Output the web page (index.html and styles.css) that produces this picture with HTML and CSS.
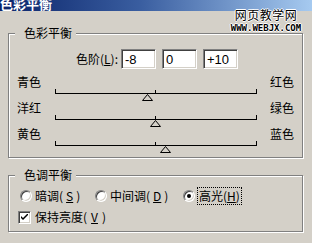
FILE: index.html
```html
<!DOCTYPE html>
<html>
  <head>
    <meta charset="UTF-8" />
    <title>色彩平衡</title>
    <link rel="stylesheet" href="styles.css">
  </head>

  <body>
    <div class="dialog">
      <div class="titlebar"><span class="title">色彩平衡</span></div>
      <div class="watermark">
        <div class="wm-cn">网页教学网</div>
        <div class="wm-en">WWW.WEBJX.COM</div>
      </div>

      <fieldset class="group group-color">
        <legend>色彩平衡</legend>
        <div class="levels">
          <label class="levels-label" for="level1">色阶(<u>L</u>):</label>
          <input id="level1" class="field" type="text" value="-8" />
          <input class="field" type="text" value="0" />
          <input class="field" type="text" value="+10" />
        </div>

        <div class="balance">
          <div class="balance-names"><span>青色</span><span>红色</span></div>
          <div class="track">
            <span class="thumb" style="left: 87px">
              <svg width="11" height="7" viewBox="0 0 11 7"><path d="M5.5 0.5 L10.5 6.5 H0.5 Z" fill="#d4d0c8" stroke="#000" /></svg>
            </span>
          </div>
        </div>
        <div class="balance">
          <div class="balance-names"><span>洋红</span><span>绿色</span></div>
          <div class="track">
            <span class="thumb" style="left: 95px">
              <svg width="11" height="7" viewBox="0 0 11 7"><path d="M5.5 0.5 L10.5 6.5 H0.5 Z" fill="#d4d0c8" stroke="#000" /></svg>
            </span>
          </div>
        </div>
        <div class="balance">
          <div class="balance-names"><span>黄色</span><span>蓝色</span></div>
          <div class="track">
            <span class="thumb" style="left: 105px">
              <svg width="11" height="7" viewBox="0 0 11 7"><path d="M5.5 0.5 L10.5 6.5 H0.5 Z" fill="#d4d0c8" stroke="#000" /></svg>
            </span>
          </div>
        </div>
      </fieldset>

      <fieldset class="group group-tone">
        <legend>色调平衡</legend>
        <div class="tones">
          <label class="option"><span class="radio"></span>暗调(<u>S</u>)</label>
          <label class="option"><span class="radio"></span>中间调(<u>D</u>)</label>
          <label class="option"><span class="radio checked"></span><span class="focus">高光(<u>H</u>)</span></label>
        </div>
        <label class="option keep">
          <span class="check">
            <svg width="7" height="7" viewBox="0 0 7 7"><path d="M0 2 L0 4 L2 6 L7 1 L7 -1 L2 4 Z" fill="#000" /></svg>
          </span>保持亮度(<u>V</u>)
        </label>
      </fieldset>
    </div>
  </body>
</html>
```

FILE: styles.css
```css
body {
  margin: 0;
  padding: 0;
  background-color: #d4d0c8;
  font-family: "Noto Sans CJK SC", sans-serif;
  font-size: 12px;
  color: #000;
}

.dialog {
  position: relative;
  width: 312px;
  height: 243px;
  overflow: hidden;
}

.titlebar {
  height: 11px;
  display: flex;
  align-items: flex-end;
  overflow: hidden;
  background: linear-gradient(to right, #0a246a, #3a5ea0 45%, #a6caf0);
}

.title {
  color: #fff;
  font-weight: bold;
  font-size: 13px;
  line-height: 12px;
  padding-bottom: 1px;
}

.watermark {
  position: absolute;
  top: 8px;
  right: 8px;
  width: 76px;
  text-align: center;
}

.wm-cn {
  font-size: 12px;
  line-height: 13px;
  letter-spacing: 0.5px;
  text-shadow: 1px 0 #fff, -1px 0 #fff, 0 1px #fff, 0 -1px #fff;
}

.wm-en {
  margin-top: 2px;
  font-family: "DejaVu Sans Mono", monospace;
  font-weight: bold;
  font-size: 9px;
  line-height: 10px;
  text-shadow: 1px 0 #fff, -1px 0 #fff, 0 1px #fff, 0 -1px #fff;
}

.group {
  margin: 15px 9px 0 8px;
  padding: 0;
  min-width: 0;
  border: 1px solid #808080;
  box-shadow: inset 1px 1px 0 #fff, 1px 1px 0 #fff;
}

.group legend {
  margin-left: 6px;
  padding: 0 4px 0 9px;
  line-height: 14px;
  background-color: #d4d0c8;
}

.group-color {
  padding-bottom: 4px;
}

.group-tone {
  margin-top: 10px;
  padding-bottom: 6px;
}

.levels {
  display: flex;
  margin-top: 9px;
}

.levels-label {
  width: 109px;
  margin-right: 3px;
  text-align: right;
  line-height: 20px;
}

.field {
  width: 35px;
  height: 20px;
  box-sizing: border-box;
  margin: 0 6px 0 0;
  padding: 0 0 0 3px;
  font-family: "Liberation Sans", sans-serif;
  font-size: 13px;
  color: #000;
  background-color: #fff;
  border: 1px solid;
  border-color: #808080 #fff #fff #808080;
  box-shadow: inset 1px 1px 0 #404040, inset -1px -1px 0 #d4d0c8;
  outline: none;
}

.balance {
  height: 26px;
}

.levels + .balance {
  margin-top: 6px;
}

.balance-names {
  display: flex;
  justify-content: space-between;
  padding: 0 8px;
  line-height: 14px;
}

.track {
  position: relative;
  height: 12px;
  width: 202px;
  margin-left: 46px;
}

.track::before {
  content: "";
  position: absolute;
  top: 0;
  left: 0;
  right: 0;
  height: 4px;
  border: 1px solid #000;
  border-top: none;
}

.track::after {
  content: "";
  position: absolute;
  top: 1px;
  left: 100px;
  width: 1px;
  height: 4px;
  background-color: #000;
}

.thumb {
  position: absolute;
  top: 5px;
  width: 11px;
  height: 7px;
  line-height: 0;
}

.tones {
  display: grid;
  grid-template-columns: 75px 88px auto;
  margin: 6px 0 0 11px;
  height: 16px;
}

.option {
  display: flex;
  align-items: center;
  gap: 3px;
  line-height: 16px;
  white-space: nowrap;
}

.radio {
  width: 12px;
  height: 12px;
  box-sizing: border-box;
  border-radius: 50%;
  background-color: #fff;
  border: 1px solid;
  border-color: #808080 #fff #fff #808080;
  box-shadow: inset 1px 1px 0 #404040, inset -1px -1px 0 #d4d0c8;
  display: flex;
  align-items: center;
  justify-content: center;
}

.radio.checked::after {
  content: "";
  width: 4px;
  height: 4px;
  border-radius: 50%;
  background-color: #000;
}

.focus {
  padding: 0 1px;
  outline: 1px dotted #000;
}

.keep {
  margin: 5px 0 0 9px;
  gap: 4px;
}

.check {
  width: 13px;
  height: 13px;
  box-sizing: border-box;
  background-color: #fff;
  border: 1px solid;
  border-color: #808080 #fff #fff #808080;
  box-shadow: inset 1px 1px 0 #404040, inset -1px -1px 0 #d4d0c8;
  display: flex;
  align-items: center;
  justify-content: center;
}

.check svg {
  display: block;
}
```
